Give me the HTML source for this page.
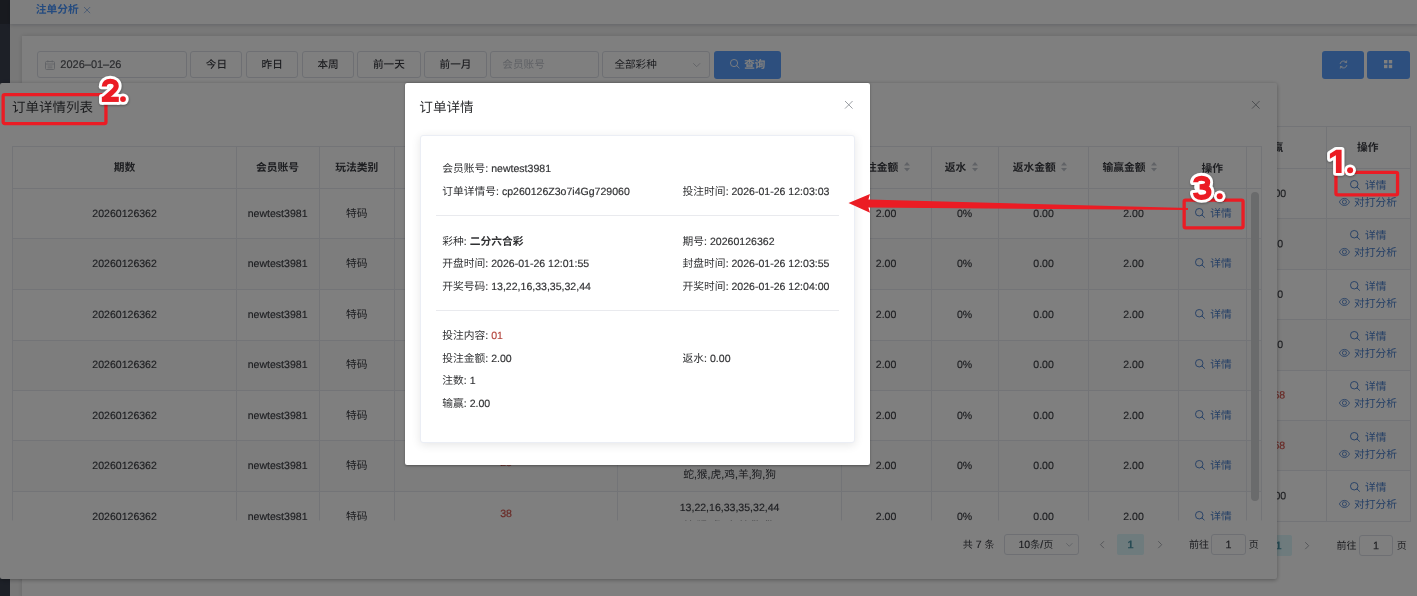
<!DOCTYPE html>
<html lang="zh-CN"><head><meta charset="utf-8"><title>订单详情</title><style>
html,body{margin:0;padding:0}
body{width:1417px;height:596px;overflow:hidden;position:relative;background:#f0f0f1;
font-family:"Liberation Sans","Noto Sans CJK SC",sans-serif;font-size:10.55px;text-rendering:geometricPrecision;}
#w{position:absolute;left:0;top:0;width:1417px;height:596px;overflow:hidden;will-change:transform}
.a{position:absolute;display:block}
.t{position:absolute;white-space:pre;margin:0}
svg.tx{font-family:"Liberation Sans","Noto Sans CJK SC",sans-serif;text-rendering:geometricPrecision;font-kerning:none;font-variant-ligatures:none;white-space:pre}
svg.tx text{stroke-width:0.16px;white-space:pre}
svg{overflow:visible}
</style></head><body><div id="w"><div class="a" style="left:0px;top:0px;width:10px;height:596px;background:#3a404f;"></div><div class="a" style="left:0px;top:0px;width:10px;height:24px;background:#31353f;"></div><div class="a" style="left:10px;top:0px;width:1407px;height:24px;background:#fff;box-shadow:0 1px 4px rgba(0,21,41,.18);"></div><svg class="a" style="left:84.1px;top:6.5px;" width="6.2" height="6.2" viewBox="0 0 6.2 6.2"><path d="M0.3 0.3L5.9 5.9M5.9 0.3L0.3 5.9" stroke="#7fa9e6" stroke-width="0.8" stroke-linecap="round"/></svg><div class="a" style="left:22px;top:36px;width:1398px;height:564px;background:#fff;box-shadow:0 0 5px rgba(0,0,0,.14);"></div><div class="a" style="left:37px;top:51px;width:150px;height:27.3px;box-sizing:border-box;border:1px solid #dcdfe6;border-radius:3px;background:#fff;"></div><svg class="a" style="left:45px;top:59.5px;" width="10" height="10" viewBox="0 0 10 10"><rect x="0.5" y="1.5" width="9" height="8" rx="1" fill="none" stroke="#c0c4cc" stroke-width="0.9"/><path d="M0.5 4H9.5M2.6 6H7.4M2.6 7.8H7.4M2.8 0.3V2.4M7.2 0.3V2.4" stroke="#c0c4cc" stroke-width="0.8" fill="none"/></svg><div class="a" style="left:190.3px;top:51px;width:52.2px;height:27.3px;box-sizing:border-box;border:1px solid #dcdfe6;border-radius:3px;background:#fff;"></div><div class="a" style="left:246px;top:51px;width:52.4px;height:27.3px;box-sizing:border-box;border:1px solid #dcdfe6;border-radius:3px;background:#fff;"></div><div class="a" style="left:302px;top:51px;width:52.2px;height:27.3px;box-sizing:border-box;border:1px solid #dcdfe6;border-radius:3px;background:#fff;"></div><div class="a" style="left:357.2px;top:51px;width:63.4px;height:27.3px;box-sizing:border-box;border:1px solid #dcdfe6;border-radius:3px;background:#fff;"></div><div class="a" style="left:424.4px;top:51px;width:62.2px;height:27.3px;box-sizing:border-box;border:1px solid #dcdfe6;border-radius:3px;background:#fff;"></div><div class="a" style="left:490.3px;top:51px;width:108.5px;height:27.3px;box-sizing:border-box;border:1px solid #dcdfe6;border-radius:3px;background:#fff;"></div><div class="a" style="left:602.3px;top:51px;width:108.2px;height:27.3px;box-sizing:border-box;border:1px solid #dcdfe6;border-radius:3px;background:#fff;"></div><svg class="a" style="left:693.3px;top:62.5px;" width="7.4" height="4.7" viewBox="0 0 7.4 4.7"><path d="M0.5 0.5L3.7 3.7L6.9 0.5" fill="none" stroke="#c0c4cc" stroke-width="0.9" stroke-linecap="round" stroke-linejoin="round"/></svg><div class="a" style="left:714.2px;top:51px;width:66.6px;height:27.7px;background:#5a9ffd;border-radius:3px;"></div><svg class="a" style="left:730.4px;top:59.45px;" width="9.6" height="9.6" viewBox="0 0 9.6 9.6"><circle cx="4.05" cy="4.05" r="3.60" fill="none" stroke="#fff" stroke-width="0.9"/><path d="M6.71 6.71L9.15 9.00" stroke="#fff" stroke-width="0.9" stroke-linecap="round"/></svg><div class="a" style="left:1322px;top:51px;width:42px;height:28px;background:#5a9ffd;border-radius:3px;"></div><svg class="a" style="left:1338.5px;top:60.0px;" width="9" height="9" viewBox="0 0 9 9"><path d="M1.15 3.6A3.5 3.5 0 0 1 7.3 2.3M7.85 5.4A3.5 3.5 0 0 1 1.7 6.7" fill="none" stroke="#fff" stroke-width="0.85" stroke-linecap="round"/><path d="M7.7 0.8L7.5 2.55L5.8 2.3M1.3 8.2L1.5 6.45L3.2 6.7" fill="none" stroke="#fff" stroke-width="0.8" stroke-linecap="round" stroke-linejoin="round"/></svg><div class="a" style="left:1367px;top:51px;width:43px;height:28px;background:#5a9ffd;border-radius:3px;"></div><svg class="a" style="left:1384.4px;top:60.4px;" width="8.2" height="8.2" viewBox="0 0 8.2 8.2"><rect x="0" y="0" width="3.4" height="3.4" fill="#fff"/><rect x="0" y="4.8" width="3.4" height="3.4" fill="#fff"/><rect x="4.8" y="0" width="3.4" height="3.4" fill="#fff"/><rect x="4.8" y="4.8" width="3.4" height="3.4" fill="#fff"/></svg><div class="a" style="left:1200px;top:126px;width:210px;height:1px;background:#e6e9ef;"></div><div class="a" style="left:1200px;top:219px;width:210px;height:50px;background:#fafafa;"></div><div class="a" style="left:1200px;top:320px;width:210px;height:50px;background:#fafafa;"></div><div class="a" style="left:1200px;top:421px;width:210px;height:49px;background:#fafafa;"></div><div class="a" style="left:1200px;top:168px;width:210px;height:1px;background:#e6e9ef;"></div><div class="a" style="left:1200px;top:218px;width:210px;height:1px;background:#e6e9ef;"></div><div class="a" style="left:1200px;top:269px;width:210px;height:1px;background:#e6e9ef;"></div><div class="a" style="left:1200px;top:319px;width:210px;height:1px;background:#e6e9ef;"></div><div class="a" style="left:1200px;top:370px;width:210px;height:1px;background:#e6e9ef;"></div><div class="a" style="left:1200px;top:420px;width:210px;height:1px;background:#e6e9ef;"></div><div class="a" style="left:1200px;top:470px;width:210px;height:1px;background:#e6e9ef;"></div><div class="a" style="left:1200px;top:521px;width:210px;height:1px;background:#e6e9ef;"></div><div class="a" style="left:1326px;top:126px;width:1px;height:395.5px;background:#e6e9ef;"></div><div class="a" style="left:1409.5px;top:126px;width:1.0px;height:395.5px;background:#e6e9ef;"></div><svg class="a" style="left:1350.15px;top:179.75px;" width="10" height="10" viewBox="0 0 10 10"><circle cx="4.22" cy="4.22" r="3.75" fill="none" stroke="#4a7fcc" stroke-width="0.95"/><path d="M7.00 7.00L9.55 9.40" stroke="#4a7fcc" stroke-width="0.95" stroke-linecap="round"/></svg><svg class="a" style="left:1339.15px;top:197.65px;" width="10.9" height="7.9" viewBox="0 0 10.9 7.9"><path d="M0.425 3.95C2.40 -0.75 8.50 -0.75 10.475 3.95C8.50 8.65 2.40 8.65 0.425 3.95Z" fill="none" stroke="#4a7fcc" stroke-width="0.85" stroke-linejoin="round"/><circle cx="5.45" cy="3.95" r="2.05" fill="none" stroke="#4a7fcc" stroke-width="0.85"/></svg><svg class="a" style="left:1350.15px;top:230.15px;" width="10" height="10" viewBox="0 0 10 10"><circle cx="4.22" cy="4.22" r="3.75" fill="none" stroke="#4a7fcc" stroke-width="0.95"/><path d="M7.00 7.00L9.55 9.40" stroke="#4a7fcc" stroke-width="0.95" stroke-linecap="round"/></svg><svg class="a" style="left:1339.15px;top:248.05px;" width="10.9" height="7.9" viewBox="0 0 10.9 7.9"><path d="M0.425 3.95C2.40 -0.75 8.50 -0.75 10.475 3.95C8.50 8.65 2.40 8.65 0.425 3.95Z" fill="none" stroke="#4a7fcc" stroke-width="0.85" stroke-linejoin="round"/><circle cx="5.45" cy="3.95" r="2.05" fill="none" stroke="#4a7fcc" stroke-width="0.85"/></svg><svg class="a" style="left:1350.15px;top:280.55px;" width="10" height="10" viewBox="0 0 10 10"><circle cx="4.22" cy="4.22" r="3.75" fill="none" stroke="#4a7fcc" stroke-width="0.95"/><path d="M7.00 7.00L9.55 9.40" stroke="#4a7fcc" stroke-width="0.95" stroke-linecap="round"/></svg><svg class="a" style="left:1339.15px;top:298.45px;" width="10.9" height="7.9" viewBox="0 0 10.9 7.9"><path d="M0.425 3.95C2.40 -0.75 8.50 -0.75 10.475 3.95C8.50 8.65 2.40 8.65 0.425 3.95Z" fill="none" stroke="#4a7fcc" stroke-width="0.85" stroke-linejoin="round"/><circle cx="5.45" cy="3.95" r="2.05" fill="none" stroke="#4a7fcc" stroke-width="0.85"/></svg><svg class="a" style="left:1350.15px;top:330.95px;" width="10" height="10" viewBox="0 0 10 10"><circle cx="4.22" cy="4.22" r="3.75" fill="none" stroke="#4a7fcc" stroke-width="0.95"/><path d="M7.00 7.00L9.55 9.40" stroke="#4a7fcc" stroke-width="0.95" stroke-linecap="round"/></svg><svg class="a" style="left:1339.15px;top:348.85px;" width="10.9" height="7.9" viewBox="0 0 10.9 7.9"><path d="M0.425 3.95C2.40 -0.75 8.50 -0.75 10.475 3.95C8.50 8.65 2.40 8.65 0.425 3.95Z" fill="none" stroke="#4a7fcc" stroke-width="0.85" stroke-linejoin="round"/><circle cx="5.45" cy="3.95" r="2.05" fill="none" stroke="#4a7fcc" stroke-width="0.85"/></svg><svg class="a" style="left:1350.15px;top:381.35px;" width="10" height="10" viewBox="0 0 10 10"><circle cx="4.22" cy="4.22" r="3.75" fill="none" stroke="#4a7fcc" stroke-width="0.95"/><path d="M7.00 7.00L9.55 9.40" stroke="#4a7fcc" stroke-width="0.95" stroke-linecap="round"/></svg><svg class="a" style="left:1339.15px;top:399.25px;" width="10.9" height="7.9" viewBox="0 0 10.9 7.9"><path d="M0.425 3.95C2.40 -0.75 8.50 -0.75 10.475 3.95C8.50 8.65 2.40 8.65 0.425 3.95Z" fill="none" stroke="#4a7fcc" stroke-width="0.85" stroke-linejoin="round"/><circle cx="5.45" cy="3.95" r="2.05" fill="none" stroke="#4a7fcc" stroke-width="0.85"/></svg><svg class="a" style="left:1350.15px;top:431.75px;" width="10" height="10" viewBox="0 0 10 10"><circle cx="4.22" cy="4.22" r="3.75" fill="none" stroke="#4a7fcc" stroke-width="0.95"/><path d="M7.00 7.00L9.55 9.40" stroke="#4a7fcc" stroke-width="0.95" stroke-linecap="round"/></svg><svg class="a" style="left:1339.15px;top:449.65px;" width="10.9" height="7.9" viewBox="0 0 10.9 7.9"><path d="M0.425 3.95C2.40 -0.75 8.50 -0.75 10.475 3.95C8.50 8.65 2.40 8.65 0.425 3.95Z" fill="none" stroke="#4a7fcc" stroke-width="0.85" stroke-linejoin="round"/><circle cx="5.45" cy="3.95" r="2.05" fill="none" stroke="#4a7fcc" stroke-width="0.85"/></svg><svg class="a" style="left:1350.15px;top:482.15px;" width="10" height="10" viewBox="0 0 10 10"><circle cx="4.22" cy="4.22" r="3.75" fill="none" stroke="#4a7fcc" stroke-width="0.95"/><path d="M7.00 7.00L9.55 9.40" stroke="#4a7fcc" stroke-width="0.95" stroke-linecap="round"/></svg><svg class="a" style="left:1339.15px;top:500.05px;" width="10.9" height="7.9" viewBox="0 0 10.9 7.9"><path d="M0.425 3.95C2.40 -0.75 8.50 -0.75 10.475 3.95C8.50 8.65 2.40 8.65 0.425 3.95Z" fill="none" stroke="#4a7fcc" stroke-width="0.85" stroke-linejoin="round"/><circle cx="5.45" cy="3.95" r="2.05" fill="none" stroke="#4a7fcc" stroke-width="0.85"/></svg><div class="a" style="left:1265px;top:535.2px;width:26.9px;height:20.5px;background:#dcf6fb;border-radius:2px;"></div><svg class="a" style="left:1305.45px;top:541.8px;" width="4.7" height="7.4" viewBox="0 0 4.7 7.4"><path d="M0.5 0.5L3.7 3.7L0.5 6.9" fill="none" stroke="#a0a3aa" stroke-width="0.9" stroke-linecap="round" stroke-linejoin="round"/></svg><div class="a" style="left:1359.2px;top:535.2px;width:33.4px;height:20.5px;box-sizing:border-box;border:1px solid #dcdfe6;border-radius:3px;"></div><svg class="a tx" style="left:0;top:0" width="1417" height="596" viewBox="0 0 1417 596"><text x="35.80" y="13.05" font-size="10.72" font-weight="bold" fill="#4a96ff">注单分析</text><text x="60.30" y="68.0" font-size="11.0" fill="#55575c" stroke="#55575c" transform="rotate(.05 90.9 68.0)">2026–01–26</text><text x="205.79" y="68.05" font-size="10.61" font-weight="500" fill="#3c3e44">今日</text><text x="261.59" y="68.05" font-size="10.61" font-weight="500" fill="#3c3e44">昨日</text><text x="317.49" y="68.05" font-size="10.61" font-weight="500" fill="#3c3e44">本周</text><text x="372.98" y="68.05" font-size="10.61" font-weight="500" fill="#3c3e44">前一天</text><text x="439.58" y="68.05" font-size="10.61" font-weight="500" fill="#3c3e44">前一月</text><text x="502.30" y="68.05" font-size="10.61" fill="#c0c4cc">会员账号</text><text x="614.40" y="68.05" font-size="10.61" fill="#3c3e44">全部彩种</text><text x="744.20" y="68.05" font-size="10.61" font-weight="bold" fill="#fff">查询</text><text x="1356.94" y="151.21" font-size="10.76" font-weight="bold" fill="#3c3e44">操作</text><text x="1261.68" y="151.21" font-size="10.76" font-weight="bold" fill="#3c3e44">输赢</text><text x="1265.67" y="196.88" font-size="10.55" fill="#3c3e44" stroke="#3c3e44" transform="rotate(.05 1275.9 196.88)">2.00</text><text x="1365.00" y="188.71" font-size="10.76" fill="#4a7fcc">详情</text><text x="1354.00" y="205.81" font-size="10.76" fill="#4a7fcc">对打分析</text><text x="1277.13" y="247.28" font-size="10.55" fill="#3c3e44" stroke="#3c3e44" transform="rotate(.05 1280.1 247.28)">0</text><text x="1365.00" y="239.11" font-size="10.76" fill="#4a7fcc">详情</text><text x="1354.00" y="256.21" font-size="10.76" fill="#4a7fcc">对打分析</text><text x="1277.13" y="297.68" font-size="10.55" fill="#3c3e44" stroke="#3c3e44" transform="rotate(.05 1280.1 297.68)">0</text><text x="1365.00" y="289.51" font-size="10.76" fill="#4a7fcc">详情</text><text x="1354.00" y="306.61" font-size="10.76" fill="#4a7fcc">对打分析</text><text x="1277.13" y="348.08" font-size="10.55" fill="#3c3e44" stroke="#3c3e44" transform="rotate(.05 1280.1 348.08)">0</text><text x="1365.00" y="339.91" font-size="10.76" fill="#4a7fcc">详情</text><text x="1354.00" y="357.01" font-size="10.76" fill="#4a7fcc">对打分析</text><text x="1264.67" y="398.48" font-size="10.55" fill="#d2524a" stroke="#d2524a" transform="rotate(.05 1274.9 398.48)">1.68</text><text x="1365.00" y="390.31" font-size="10.76" fill="#4a7fcc">详情</text><text x="1354.00" y="407.41" font-size="10.76" fill="#4a7fcc">对打分析</text><text x="1264.67" y="448.88" font-size="10.55" fill="#d2524a" stroke="#d2524a" transform="rotate(.05 1274.9 448.88)">1.68</text><text x="1365.00" y="440.71" font-size="10.76" fill="#4a7fcc">详情</text><text x="1354.00" y="457.81" font-size="10.76" fill="#4a7fcc">对打分析</text><text x="1265.67" y="499.28" font-size="10.55" fill="#3c3e44" stroke="#3c3e44" transform="rotate(.05 1275.9 499.28)">2.00</text><text x="1365.00" y="491.11" font-size="10.76" fill="#4a7fcc">详情</text><text x="1354.00" y="508.21" font-size="10.76" fill="#4a7fcc">对打分析</text><text x="1275.50" y="549.32" font-size="10.8" fill="#4f97a9" stroke="#4f97a9" font-weight="bold" transform="rotate(.05 1278.5 549.32)">1</text><text x="1336.40" y="549.06" font-size="10" fill="#3c3e44">前往</text><text x="1373.00" y="549.32" font-size="10.8" fill="#3c3e44" stroke="#3c3e44" transform="rotate(.05 1376.0 549.32)">1</text><text x="1396.80" y="549.06" font-size="10" fill="#3c3e44">页</text></svg><div class="a" style="left:0px;top:82.8px;width:1277.3px;height:496.2px;background:#fff;border-radius:2px;box-shadow:0 1px 4px rgba(0,0,0,.32);"></div><svg class="a" style="left:1252.2px;top:100.9px;" width="7.6" height="7.6" viewBox="0 0 7.6 7.6"><path d="M0.3 0.3L7.3 7.3M7.3 0.3L0.3 7.3" stroke="#909399" stroke-width="0.9" stroke-linecap="round"/></svg><div class="a" style="left:0;top:0;width:1417px;height:596px;clip-path:inset(145.8px 154.9000000000001px 75.60000000000002px 12px)"><div class="a" style="left:12px;top:239px;width:1249.6px;height:50px;background:#fafafa;"></div><div class="a" style="left:12px;top:341px;width:1249.6px;height:49px;background:#fafafa;"></div><div class="a" style="left:12px;top:441px;width:1249.6px;height:50px;background:#fafafa;"></div><div class="a" style="left:12px;top:146px;width:1249.6px;height:1px;background:#e6e9ef;"></div><div class="a" style="left:12px;top:188px;width:1249.6px;height:1px;background:#e6e9ef;"></div><div class="a" style="left:12px;top:238px;width:1249.6px;height:1px;background:#e6e9ef;"></div><div class="a" style="left:12px;top:289px;width:1249.6px;height:1px;background:#e6e9ef;"></div><div class="a" style="left:12px;top:340px;width:1249.6px;height:1px;background:#e6e9ef;"></div><div class="a" style="left:12px;top:390px;width:1249.6px;height:1px;background:#e6e9ef;"></div><div class="a" style="left:12px;top:440px;width:1249.6px;height:1px;background:#e6e9ef;"></div><div class="a" style="left:12px;top:491px;width:1249.6px;height:1px;background:#e6e9ef;"></div><div class="a" style="left:12px;top:542px;width:1249.6px;height:1px;background:#e6e9ef;"></div><div class="a" style="left:11.8px;top:146px;width:1.0px;height:375px;background:#e6e9ef;"></div><div class="a" style="left:235.8px;top:146px;width:1.0px;height:375px;background:#e6e9ef;"></div><div class="a" style="left:318.8px;top:146px;width:1.0px;height:375px;background:#e6e9ef;"></div><div class="a" style="left:394.1px;top:146px;width:1.0px;height:375px;background:#e6e9ef;"></div><div class="a" style="left:617.3px;top:146px;width:1.0px;height:375px;background:#e6e9ef;"></div><div class="a" style="left:840.9px;top:146px;width:1.0px;height:375px;background:#e6e9ef;"></div><div class="a" style="left:930.7px;top:146px;width:1.0px;height:375px;background:#e6e9ef;"></div><div class="a" style="left:998.0px;top:146px;width:1.0px;height:375px;background:#e6e9ef;"></div><div class="a" style="left:1087.8px;top:146px;width:1.0px;height:375px;background:#e6e9ef;"></div><div class="a" style="left:1177.9px;top:146px;width:1.0px;height:375px;background:#e6e9ef;"></div><div class="a" style="left:1245.9px;top:146px;width:1.0px;height:375px;background:#e6e9ef;"></div><div class="a" style="left:1261px;top:146px;width:1px;height:375px;background:#e6e9ef;"></div><svg class="a" style="left:903.8px;top:161.9px;" width="6" height="9.6" viewBox="0 0 6 9.6"><path d="M0 3.6L3 0L6 3.6Z" fill="#c0c4cc"/><path d="M0 6L3 9.6L6 6Z" fill="#c0c4cc"/></svg><svg class="a" style="left:972px;top:161.9px;" width="6" height="9.6" viewBox="0 0 6 9.6"><path d="M0 3.6L3 0L6 3.6Z" fill="#c0c4cc"/><path d="M0 6L3 9.6L6 6Z" fill="#c0c4cc"/></svg><svg class="a" style="left:1061px;top:161.9px;" width="6" height="9.6" viewBox="0 0 6 9.6"><path d="M0 3.6L3 0L6 3.6Z" fill="#c0c4cc"/><path d="M0 6L3 9.6L6 6Z" fill="#c0c4cc"/></svg><svg class="a" style="left:1150.7px;top:161.9px;" width="6" height="9.6" viewBox="0 0 6 9.6"><path d="M0 3.6L3 0L6 3.6Z" fill="#c0c4cc"/><path d="M0 6L3 9.6L6 6Z" fill="#c0c4cc"/></svg><svg class="a" style="left:1194.9px;top:208.26px;" width="10" height="10" viewBox="0 0 10 10"><circle cx="4.22" cy="4.22" r="3.75" fill="none" stroke="#4a7fcc" stroke-width="0.95"/><path d="M7.00 7.00L9.55 9.40" stroke="#4a7fcc" stroke-width="0.95" stroke-linecap="round"/></svg><svg class="a" style="left:1194.9px;top:258.26px;" width="10" height="10" viewBox="0 0 10 10"><circle cx="4.22" cy="4.22" r="3.75" fill="none" stroke="#4a7fcc" stroke-width="0.95"/><path d="M7.00 7.00L9.55 9.40" stroke="#4a7fcc" stroke-width="0.95" stroke-linecap="round"/></svg><svg class="a" style="left:1194.9px;top:309.26px;" width="10" height="10" viewBox="0 0 10 10"><circle cx="4.22" cy="4.22" r="3.75" fill="none" stroke="#4a7fcc" stroke-width="0.95"/><path d="M7.00 7.00L9.55 9.40" stroke="#4a7fcc" stroke-width="0.95" stroke-linecap="round"/></svg><svg class="a" style="left:1194.9px;top:359.26px;" width="10" height="10" viewBox="0 0 10 10"><circle cx="4.22" cy="4.22" r="3.75" fill="none" stroke="#4a7fcc" stroke-width="0.95"/><path d="M7.00 7.00L9.55 9.40" stroke="#4a7fcc" stroke-width="0.95" stroke-linecap="round"/></svg><svg class="a" style="left:1194.9px;top:410.26px;" width="10" height="10" viewBox="0 0 10 10"><circle cx="4.22" cy="4.22" r="3.75" fill="none" stroke="#4a7fcc" stroke-width="0.95"/><path d="M7.00 7.00L9.55 9.40" stroke="#4a7fcc" stroke-width="0.95" stroke-linecap="round"/></svg><svg class="a" style="left:1194.9px;top:460.26px;" width="10" height="10" viewBox="0 0 10 10"><circle cx="4.22" cy="4.22" r="3.75" fill="none" stroke="#4a7fcc" stroke-width="0.95"/><path d="M7.00 7.00L9.55 9.40" stroke="#4a7fcc" stroke-width="0.95" stroke-linecap="round"/></svg><svg class="a" style="left:1194.9px;top:511.26px;" width="10" height="10" viewBox="0 0 10 10"><circle cx="4.22" cy="4.22" r="3.75" fill="none" stroke="#4a7fcc" stroke-width="0.95"/><path d="M7.00 7.00L9.55 9.40" stroke="#4a7fcc" stroke-width="0.95" stroke-linecap="round"/></svg><svg class="a tx" style="left:0;top:0" width="1417" height="596" viewBox="0 0 1417 596"><text x="113.84" y="171.06" font-size="10.76" font-weight="bold" fill="#3c3e44">期数</text><text x="256.08" y="171.06" font-size="10.76" font-weight="bold" fill="#3c3e44">会员账号</text><text x="335.18" y="171.06" font-size="10.76" font-weight="bold" fill="#3c3e44">玩法类别</text><text x="484.48" y="171.06" font-size="10.76" font-weight="bold" fill="#3c3e44">投注内容</text><text x="707.98" y="171.06" font-size="10.76" font-weight="bold" fill="#3c3e44">开奖号码</text><text x="855.16" y="170.66" font-size="10.76" font-weight="bold" fill="#3c3e44">投注金额</text><text x="944.68" y="170.66" font-size="10.76" font-weight="bold" fill="#3c3e44">返水</text><text x="1012.76" y="170.66" font-size="10.76" font-weight="bold" fill="#3c3e44">返水金额</text><text x="1102.56" y="170.66" font-size="10.76" font-weight="bold" fill="#3c3e44">输赢金额</text><text x="1201.54" y="171.66" font-size="10.76" font-weight="bold" fill="#3c3e44">操作</text><text x="92.33" y="217.04" font-size="10.55" fill="#3c3e44" stroke="#3c3e44" transform="rotate(.05 124.6 217.04)">20260126362</text><text x="247.69" y="217.04" font-size="10.55" fill="#3c3e44" stroke="#3c3e44" transform="rotate(.05 277.6 217.04)">newtest3981</text><text x="345.94" y="217.17" font-size="10.76" fill="#3c3e44">特码</text><text x="500.13" y="214.04" font-size="10.55" fill="#d2524a" stroke="#d2524a" transform="rotate(.05 506.0 214.04)">01</text><text x="679.73" y="208.04" font-size="10.55" fill="#3c3e44" stroke="#3c3e44" transform="rotate(.05 729.6 208.04)">13,22,16,33,35,32,44</text><text x="683.15" y="226.17" font-size="10.76" fill="#3c3e44">蛇</text><text x="693.91" y="226.04" font-size="10.55" fill="#3c3e44" stroke="#3c3e44" transform="rotate(.05 695.4 226.04)">,</text><text x="696.84" y="226.17" font-size="10.76" fill="#3c3e44">猴</text><text x="707.60" y="226.04" font-size="10.55" fill="#3c3e44" stroke="#3c3e44" transform="rotate(.05 709.1 226.04)">,</text><text x="710.53" y="226.17" font-size="10.76" fill="#3c3e44">虎</text><text x="721.29" y="226.04" font-size="10.55" fill="#3c3e44" stroke="#3c3e44" transform="rotate(.05 722.8 226.04)">,</text><text x="724.22" y="226.17" font-size="10.76" fill="#3c3e44">鸡</text><text x="734.98" y="226.04" font-size="10.55" fill="#3c3e44" stroke="#3c3e44" transform="rotate(.05 736.4 226.04)">,</text><text x="737.91" y="226.17" font-size="10.76" fill="#3c3e44">羊</text><text x="748.67" y="226.04" font-size="10.55" fill="#3c3e44" stroke="#3c3e44" transform="rotate(.05 750.1 226.04)">,</text><text x="751.60" y="226.17" font-size="10.76" fill="#3c3e44">狗</text><text x="762.36" y="226.04" font-size="10.55" fill="#3c3e44" stroke="#3c3e44" transform="rotate(.05 763.8 226.04)">,</text><text x="765.29" y="226.17" font-size="10.76" fill="#3c3e44">狗</text><text x="875.83" y="217.04" font-size="10.55" fill="#3c3e44" stroke="#3c3e44" transform="rotate(.05 886.1 217.04)">2.00</text><text x="956.88" y="217.04" font-size="10.55" fill="#3c3e44" stroke="#3c3e44" transform="rotate(.05 964.5 217.04)">0%</text><text x="1033.33" y="217.04" font-size="10.55" fill="#3c3e44" stroke="#3c3e44" transform="rotate(.05 1043.6 217.04)">0.00</text><text x="1123.23" y="217.04" font-size="10.55" fill="#3c3e44" stroke="#3c3e44" transform="rotate(.05 1133.5 217.04)">2.00</text><text x="1210.20" y="217.17" font-size="10.76" fill="#4a7fcc">详情</text><text x="92.33" y="267.04" font-size="10.55" fill="#3c3e44" stroke="#3c3e44" transform="rotate(.05 124.6 267.04)">20260126362</text><text x="247.69" y="267.04" font-size="10.55" fill="#3c3e44" stroke="#3c3e44" transform="rotate(.05 277.6 267.04)">newtest3981</text><text x="345.94" y="267.17" font-size="10.76" fill="#3c3e44">特码</text><text x="500.13" y="264.04" font-size="10.55" fill="#d2524a" stroke="#d2524a" transform="rotate(.05 506.0 264.04)">05</text><text x="679.73" y="258.04" font-size="10.55" fill="#3c3e44" stroke="#3c3e44" transform="rotate(.05 729.6 258.04)">13,22,16,33,35,32,44</text><text x="683.15" y="276.17" font-size="10.76" fill="#3c3e44">蛇</text><text x="693.91" y="276.04" font-size="10.55" fill="#3c3e44" stroke="#3c3e44" transform="rotate(.05 695.4 276.04)">,</text><text x="696.84" y="276.17" font-size="10.76" fill="#3c3e44">猴</text><text x="707.60" y="276.04" font-size="10.55" fill="#3c3e44" stroke="#3c3e44" transform="rotate(.05 709.1 276.04)">,</text><text x="710.53" y="276.17" font-size="10.76" fill="#3c3e44">虎</text><text x="721.29" y="276.04" font-size="10.55" fill="#3c3e44" stroke="#3c3e44" transform="rotate(.05 722.8 276.04)">,</text><text x="724.22" y="276.17" font-size="10.76" fill="#3c3e44">鸡</text><text x="734.98" y="276.04" font-size="10.55" fill="#3c3e44" stroke="#3c3e44" transform="rotate(.05 736.4 276.04)">,</text><text x="737.91" y="276.17" font-size="10.76" fill="#3c3e44">羊</text><text x="748.67" y="276.04" font-size="10.55" fill="#3c3e44" stroke="#3c3e44" transform="rotate(.05 750.1 276.04)">,</text><text x="751.60" y="276.17" font-size="10.76" fill="#3c3e44">狗</text><text x="762.36" y="276.04" font-size="10.55" fill="#3c3e44" stroke="#3c3e44" transform="rotate(.05 763.8 276.04)">,</text><text x="765.29" y="276.17" font-size="10.76" fill="#3c3e44">狗</text><text x="875.83" y="267.04" font-size="10.55" fill="#3c3e44" stroke="#3c3e44" transform="rotate(.05 886.1 267.04)">2.00</text><text x="956.88" y="267.04" font-size="10.55" fill="#3c3e44" stroke="#3c3e44" transform="rotate(.05 964.5 267.04)">0%</text><text x="1033.33" y="267.04" font-size="10.55" fill="#3c3e44" stroke="#3c3e44" transform="rotate(.05 1043.6 267.04)">0.00</text><text x="1123.23" y="267.04" font-size="10.55" fill="#3c3e44" stroke="#3c3e44" transform="rotate(.05 1133.5 267.04)">2.00</text><text x="1210.20" y="267.17" font-size="10.76" fill="#4a7fcc">详情</text><text x="92.33" y="318.04" font-size="10.55" fill="#3c3e44" stroke="#3c3e44" transform="rotate(.05 124.6 318.04)">20260126362</text><text x="247.69" y="318.04" font-size="10.55" fill="#3c3e44" stroke="#3c3e44" transform="rotate(.05 277.6 318.04)">newtest3981</text><text x="345.94" y="318.17" font-size="10.76" fill="#3c3e44">特码</text><text x="500.13" y="315.04" font-size="10.55" fill="#d2524a" stroke="#d2524a" transform="rotate(.05 506.0 315.04)">12</text><text x="679.73" y="309.04" font-size="10.55" fill="#3c3e44" stroke="#3c3e44" transform="rotate(.05 729.6 309.04)">13,22,16,33,35,32,44</text><text x="683.15" y="327.17" font-size="10.76" fill="#3c3e44">蛇</text><text x="693.91" y="327.04" font-size="10.55" fill="#3c3e44" stroke="#3c3e44" transform="rotate(.05 695.4 327.04)">,</text><text x="696.84" y="327.17" font-size="10.76" fill="#3c3e44">猴</text><text x="707.60" y="327.04" font-size="10.55" fill="#3c3e44" stroke="#3c3e44" transform="rotate(.05 709.1 327.04)">,</text><text x="710.53" y="327.17" font-size="10.76" fill="#3c3e44">虎</text><text x="721.29" y="327.04" font-size="10.55" fill="#3c3e44" stroke="#3c3e44" transform="rotate(.05 722.8 327.04)">,</text><text x="724.22" y="327.17" font-size="10.76" fill="#3c3e44">鸡</text><text x="734.98" y="327.04" font-size="10.55" fill="#3c3e44" stroke="#3c3e44" transform="rotate(.05 736.4 327.04)">,</text><text x="737.91" y="327.17" font-size="10.76" fill="#3c3e44">羊</text><text x="748.67" y="327.04" font-size="10.55" fill="#3c3e44" stroke="#3c3e44" transform="rotate(.05 750.1 327.04)">,</text><text x="751.60" y="327.17" font-size="10.76" fill="#3c3e44">狗</text><text x="762.36" y="327.04" font-size="10.55" fill="#3c3e44" stroke="#3c3e44" transform="rotate(.05 763.8 327.04)">,</text><text x="765.29" y="327.17" font-size="10.76" fill="#3c3e44">狗</text><text x="875.83" y="318.04" font-size="10.55" fill="#3c3e44" stroke="#3c3e44" transform="rotate(.05 886.1 318.04)">2.00</text><text x="956.88" y="318.04" font-size="10.55" fill="#3c3e44" stroke="#3c3e44" transform="rotate(.05 964.5 318.04)">0%</text><text x="1033.33" y="318.04" font-size="10.55" fill="#3c3e44" stroke="#3c3e44" transform="rotate(.05 1043.6 318.04)">0.00</text><text x="1123.23" y="318.04" font-size="10.55" fill="#3c3e44" stroke="#3c3e44" transform="rotate(.05 1133.5 318.04)">2.00</text><text x="1210.20" y="318.17" font-size="10.76" fill="#4a7fcc">详情</text><text x="92.33" y="368.04" font-size="10.55" fill="#3c3e44" stroke="#3c3e44" transform="rotate(.05 124.6 368.04)">20260126362</text><text x="247.69" y="368.04" font-size="10.55" fill="#3c3e44" stroke="#3c3e44" transform="rotate(.05 277.6 368.04)">newtest3981</text><text x="345.94" y="368.17" font-size="10.76" fill="#3c3e44">特码</text><text x="500.13" y="365.04" font-size="10.55" fill="#d2524a" stroke="#d2524a" transform="rotate(.05 506.0 365.04)">17</text><text x="679.73" y="359.04" font-size="10.55" fill="#3c3e44" stroke="#3c3e44" transform="rotate(.05 729.6 359.04)">13,22,16,33,35,32,44</text><text x="683.15" y="377.17" font-size="10.76" fill="#3c3e44">蛇</text><text x="693.91" y="377.04" font-size="10.55" fill="#3c3e44" stroke="#3c3e44" transform="rotate(.05 695.4 377.04)">,</text><text x="696.84" y="377.17" font-size="10.76" fill="#3c3e44">猴</text><text x="707.60" y="377.04" font-size="10.55" fill="#3c3e44" stroke="#3c3e44" transform="rotate(.05 709.1 377.04)">,</text><text x="710.53" y="377.17" font-size="10.76" fill="#3c3e44">虎</text><text x="721.29" y="377.04" font-size="10.55" fill="#3c3e44" stroke="#3c3e44" transform="rotate(.05 722.8 377.04)">,</text><text x="724.22" y="377.17" font-size="10.76" fill="#3c3e44">鸡</text><text x="734.98" y="377.04" font-size="10.55" fill="#3c3e44" stroke="#3c3e44" transform="rotate(.05 736.4 377.04)">,</text><text x="737.91" y="377.17" font-size="10.76" fill="#3c3e44">羊</text><text x="748.67" y="377.04" font-size="10.55" fill="#3c3e44" stroke="#3c3e44" transform="rotate(.05 750.1 377.04)">,</text><text x="751.60" y="377.17" font-size="10.76" fill="#3c3e44">狗</text><text x="762.36" y="377.04" font-size="10.55" fill="#3c3e44" stroke="#3c3e44" transform="rotate(.05 763.8 377.04)">,</text><text x="765.29" y="377.17" font-size="10.76" fill="#3c3e44">狗</text><text x="875.83" y="368.04" font-size="10.55" fill="#3c3e44" stroke="#3c3e44" transform="rotate(.05 886.1 368.04)">2.00</text><text x="956.88" y="368.04" font-size="10.55" fill="#3c3e44" stroke="#3c3e44" transform="rotate(.05 964.5 368.04)">0%</text><text x="1033.33" y="368.04" font-size="10.55" fill="#3c3e44" stroke="#3c3e44" transform="rotate(.05 1043.6 368.04)">0.00</text><text x="1123.23" y="368.04" font-size="10.55" fill="#3c3e44" stroke="#3c3e44" transform="rotate(.05 1133.5 368.04)">2.00</text><text x="1210.20" y="368.17" font-size="10.76" fill="#4a7fcc">详情</text><text x="92.33" y="419.04" font-size="10.55" fill="#3c3e44" stroke="#3c3e44" transform="rotate(.05 124.6 419.04)">20260126362</text><text x="247.69" y="419.04" font-size="10.55" fill="#3c3e44" stroke="#3c3e44" transform="rotate(.05 277.6 419.04)">newtest3981</text><text x="345.94" y="419.17" font-size="10.76" fill="#3c3e44">特码</text><text x="500.13" y="416.04" font-size="10.55" fill="#d2524a" stroke="#d2524a" transform="rotate(.05 506.0 416.04)">23</text><text x="679.73" y="410.04" font-size="10.55" fill="#3c3e44" stroke="#3c3e44" transform="rotate(.05 729.6 410.04)">13,22,16,33,35,32,44</text><text x="683.15" y="428.17" font-size="10.76" fill="#3c3e44">蛇</text><text x="693.91" y="428.04" font-size="10.55" fill="#3c3e44" stroke="#3c3e44" transform="rotate(.05 695.4 428.04)">,</text><text x="696.84" y="428.17" font-size="10.76" fill="#3c3e44">猴</text><text x="707.60" y="428.04" font-size="10.55" fill="#3c3e44" stroke="#3c3e44" transform="rotate(.05 709.1 428.04)">,</text><text x="710.53" y="428.17" font-size="10.76" fill="#3c3e44">虎</text><text x="721.29" y="428.04" font-size="10.55" fill="#3c3e44" stroke="#3c3e44" transform="rotate(.05 722.8 428.04)">,</text><text x="724.22" y="428.17" font-size="10.76" fill="#3c3e44">鸡</text><text x="734.98" y="428.04" font-size="10.55" fill="#3c3e44" stroke="#3c3e44" transform="rotate(.05 736.4 428.04)">,</text><text x="737.91" y="428.17" font-size="10.76" fill="#3c3e44">羊</text><text x="748.67" y="428.04" font-size="10.55" fill="#3c3e44" stroke="#3c3e44" transform="rotate(.05 750.1 428.04)">,</text><text x="751.60" y="428.17" font-size="10.76" fill="#3c3e44">狗</text><text x="762.36" y="428.04" font-size="10.55" fill="#3c3e44" stroke="#3c3e44" transform="rotate(.05 763.8 428.04)">,</text><text x="765.29" y="428.17" font-size="10.76" fill="#3c3e44">狗</text><text x="875.83" y="419.04" font-size="10.55" fill="#3c3e44" stroke="#3c3e44" transform="rotate(.05 886.1 419.04)">2.00</text><text x="956.88" y="419.04" font-size="10.55" fill="#3c3e44" stroke="#3c3e44" transform="rotate(.05 964.5 419.04)">0%</text><text x="1033.33" y="419.04" font-size="10.55" fill="#3c3e44" stroke="#3c3e44" transform="rotate(.05 1043.6 419.04)">0.00</text><text x="1123.23" y="419.04" font-size="10.55" fill="#3c3e44" stroke="#3c3e44" transform="rotate(.05 1133.5 419.04)">2.00</text><text x="1210.20" y="419.17" font-size="10.76" fill="#4a7fcc">详情</text><text x="92.33" y="469.04" font-size="10.55" fill="#3c3e44" stroke="#3c3e44" transform="rotate(.05 124.6 469.04)">20260126362</text><text x="247.69" y="469.04" font-size="10.55" fill="#3c3e44" stroke="#3c3e44" transform="rotate(.05 277.6 469.04)">newtest3981</text><text x="345.94" y="469.17" font-size="10.76" fill="#3c3e44">特码</text><text x="500.13" y="466.04" font-size="10.55" fill="#d2524a" stroke="#d2524a" transform="rotate(.05 506.0 466.04)">28</text><text x="679.73" y="460.04" font-size="10.55" fill="#3c3e44" stroke="#3c3e44" transform="rotate(.05 729.6 460.04)">13,22,16,33,35,32,44</text><text x="683.15" y="478.17" font-size="10.76" fill="#3c3e44">蛇</text><text x="693.91" y="478.04" font-size="10.55" fill="#3c3e44" stroke="#3c3e44" transform="rotate(.05 695.4 478.04)">,</text><text x="696.84" y="478.17" font-size="10.76" fill="#3c3e44">猴</text><text x="707.60" y="478.04" font-size="10.55" fill="#3c3e44" stroke="#3c3e44" transform="rotate(.05 709.1 478.04)">,</text><text x="710.53" y="478.17" font-size="10.76" fill="#3c3e44">虎</text><text x="721.29" y="478.04" font-size="10.55" fill="#3c3e44" stroke="#3c3e44" transform="rotate(.05 722.8 478.04)">,</text><text x="724.22" y="478.17" font-size="10.76" fill="#3c3e44">鸡</text><text x="734.98" y="478.04" font-size="10.55" fill="#3c3e44" stroke="#3c3e44" transform="rotate(.05 736.4 478.04)">,</text><text x="737.91" y="478.17" font-size="10.76" fill="#3c3e44">羊</text><text x="748.67" y="478.04" font-size="10.55" fill="#3c3e44" stroke="#3c3e44" transform="rotate(.05 750.1 478.04)">,</text><text x="751.60" y="478.17" font-size="10.76" fill="#3c3e44">狗</text><text x="762.36" y="478.04" font-size="10.55" fill="#3c3e44" stroke="#3c3e44" transform="rotate(.05 763.8 478.04)">,</text><text x="765.29" y="478.17" font-size="10.76" fill="#3c3e44">狗</text><text x="875.83" y="469.04" font-size="10.55" fill="#3c3e44" stroke="#3c3e44" transform="rotate(.05 886.1 469.04)">2.00</text><text x="956.88" y="469.04" font-size="10.55" fill="#3c3e44" stroke="#3c3e44" transform="rotate(.05 964.5 469.04)">0%</text><text x="1033.33" y="469.04" font-size="10.55" fill="#3c3e44" stroke="#3c3e44" transform="rotate(.05 1043.6 469.04)">0.00</text><text x="1123.23" y="469.04" font-size="10.55" fill="#3c3e44" stroke="#3c3e44" transform="rotate(.05 1133.5 469.04)">2.00</text><text x="1210.20" y="469.17" font-size="10.76" fill="#4a7fcc">详情</text><text x="92.33" y="520.04" font-size="10.55" fill="#3c3e44" stroke="#3c3e44" transform="rotate(.05 124.6 520.04)">20260126362</text><text x="247.69" y="520.04" font-size="10.55" fill="#3c3e44" stroke="#3c3e44" transform="rotate(.05 277.6 520.04)">newtest3981</text><text x="345.94" y="520.17" font-size="10.76" fill="#3c3e44">特码</text><text x="500.13" y="517.04" font-size="10.55" fill="#d2524a" stroke="#d2524a" transform="rotate(.05 506.0 517.04)">38</text><text x="679.73" y="511.04" font-size="10.55" fill="#3c3e44" stroke="#3c3e44" transform="rotate(.05 729.6 511.04)">13,22,16,33,35,32,44</text><text x="683.15" y="529.17" font-size="10.76" fill="#3c3e44">蛇</text><text x="693.91" y="529.04" font-size="10.55" fill="#3c3e44" stroke="#3c3e44" transform="rotate(.05 695.4 529.04)">,</text><text x="696.84" y="529.17" font-size="10.76" fill="#3c3e44">猴</text><text x="707.60" y="529.04" font-size="10.55" fill="#3c3e44" stroke="#3c3e44" transform="rotate(.05 709.1 529.04)">,</text><text x="710.53" y="529.17" font-size="10.76" fill="#3c3e44">虎</text><text x="721.29" y="529.04" font-size="10.55" fill="#3c3e44" stroke="#3c3e44" transform="rotate(.05 722.8 529.04)">,</text><text x="724.22" y="529.17" font-size="10.76" fill="#3c3e44">鸡</text><text x="734.98" y="529.04" font-size="10.55" fill="#3c3e44" stroke="#3c3e44" transform="rotate(.05 736.4 529.04)">,</text><text x="737.91" y="529.17" font-size="10.76" fill="#3c3e44">羊</text><text x="748.67" y="529.04" font-size="10.55" fill="#3c3e44" stroke="#3c3e44" transform="rotate(.05 750.1 529.04)">,</text><text x="751.60" y="529.17" font-size="10.76" fill="#3c3e44">狗</text><text x="762.36" y="529.04" font-size="10.55" fill="#3c3e44" stroke="#3c3e44" transform="rotate(.05 763.8 529.04)">,</text><text x="765.29" y="529.17" font-size="10.76" fill="#3c3e44">狗</text><text x="875.83" y="520.04" font-size="10.55" fill="#3c3e44" stroke="#3c3e44" transform="rotate(.05 886.1 520.04)">2.00</text><text x="956.88" y="520.04" font-size="10.55" fill="#3c3e44" stroke="#3c3e44" transform="rotate(.05 964.5 520.04)">0%</text><text x="1033.33" y="520.04" font-size="10.55" fill="#3c3e44" stroke="#3c3e44" transform="rotate(.05 1043.6 520.04)">0.00</text><text x="1123.23" y="520.04" font-size="10.55" fill="#3c3e44" stroke="#3c3e44" transform="rotate(.05 1133.5 520.04)">2.00</text><text x="1210.20" y="520.17" font-size="10.76" fill="#4a7fcc">详情</text></svg></div><div class="a" style="left:1251.3px;top:192px;width:7.5px;height:309px;background:#d5d6d9;border-radius:4px;"></div><div class="a" style="left:1004px;top:534.2px;width:74.7px;height:20.4px;box-sizing:border-box;border:1px solid #dcdfe6;border-radius:3px;"></div><svg class="a" style="left:1066.0px;top:542.85px;" width="6.6" height="4.3" viewBox="0 0 6.6 4.3"><path d="M0.5 0.5L3.3 3.3L6.1 0.5" fill="none" stroke="#c0c4cc" stroke-width="0.9" stroke-linecap="round" stroke-linejoin="round"/></svg><svg class="a" style="left:1099.75px;top:540.8px;" width="4.7" height="7.4" viewBox="0 0 4.7 7.4"><path d="M3.7 0.5L0.5 3.7L3.7 6.9" fill="none" stroke="#a0a3aa" stroke-width="0.9" stroke-linecap="round" stroke-linejoin="round"/></svg><div class="a" style="left:1117px;top:534px;width:27px;height:20.6px;background:#dcf6fb;border-radius:2px;"></div><svg class="a" style="left:1157.55px;top:540.8px;" width="4.7" height="7.4" viewBox="0 0 4.7 7.4"><path d="M0.5 0.5L3.7 3.7L0.5 6.9" fill="none" stroke="#a0a3aa" stroke-width="0.9" stroke-linecap="round" stroke-linejoin="round"/></svg><div class="a" style="left:1211.2px;top:534.2px;width:34.4px;height:20.4px;box-sizing:border-box;border:1px solid #dcdfe6;border-radius:3px;"></div><svg class="a tx" style="left:0;top:0" width="1417" height="596" viewBox="0 0 1417 596"><text x="12.00" y="112.18" font-size="13.5" fill="#3a3c40">订单详情列表</text><text x="962.80" y="547.96" font-size="10" fill="#3c3e44">共</text><text x="972.80" y="548.13" font-size="10.55" fill="#3c3e44" stroke="#3c3e44" transform="rotate(.05 978.7 548.13)"> 7 </text><text x="984.53" y="547.96" font-size="10" fill="#3c3e44">条</text><text x="1018.50" y="548.13" font-size="10.55" fill="#3c3e44" stroke="#3c3e44" transform="rotate(.05 1024.4 548.13)">10</text><text x="1030.23" y="547.96" font-size="10" fill="#3c3e44">条</text><text x="1040.23" y="548.13" font-size="10.55" fill="#3c3e44" stroke="#3c3e44" transform="rotate(.05 1041.7 548.13)">/</text><text x="1043.17" y="547.96" font-size="10" fill="#3c3e44">页</text><text x="1127.40" y="548.22" font-size="10.8" fill="#4f97a9" stroke="#4f97a9" font-weight="bold" transform="rotate(.05 1130.4 548.22)">1</text><text x="1189.00" y="547.96" font-size="10" fill="#3c3e44">前往</text><text x="1225.40" y="548.22" font-size="10.8" fill="#3c3e44" stroke="#3c3e44" transform="rotate(.05 1228.4 548.22)">1</text><text x="1248.80" y="547.96" font-size="10" fill="#3c3e44">页</text></svg><div class="a" style="left:0;top:0;width:1417px;height:596px;background:rgba(0,0,0,.5)"></div><div class="a" style="left:405px;top:82.6px;width:464.7px;height:382.0px;background:#fff;border-radius:2px;box-shadow:0 0.5px 2.5px rgba(0,0,0,.34);"></div><svg class="a" style="left:844.7px;top:100.6px;" width="7.6" height="7.6" viewBox="0 0 7.6 7.6"><path d="M0.3 0.3L7.3 7.3M7.3 0.3L0.3 7.3" stroke="#909399" stroke-width="0.9" stroke-linecap="round"/></svg><div class="a" style="left:420px;top:135px;width:435px;height:308px;box-sizing:border-box;background:#fff;border:1px solid #ebeef5;border-radius:3px;box-shadow:0 2px 10px rgba(0,0,0,.1);"></div><div class="a" style="left:436px;top:215px;width:403.3px;height:1px;background:#e9eaee;"></div><div class="a" style="left:436px;top:310px;width:403.3px;height:1px;background:#e9eaee;"></div><svg class="a tx" style="left:0;top:0" width="1417" height="596" viewBox="0 0 1417 596"><text x="419.30" y="112.22" font-size="13.6" fill="#303133">订单详情</text><text x="442.30" y="172.17" font-size="10.76" fill="#303133">会员账号</text><text x="485.34" y="172.04" font-size="10.55" fill="#303133" stroke="#303133" transform="rotate(.05 518.2 172.04)">: newtest3981</text><text x="442.30" y="195.17" font-size="10.76" fill="#303133">订单详情号</text><text x="496.10" y="195.04" font-size="10.55" fill="#303133" stroke="#303133" transform="rotate(.05 563.0 195.04)">: cp260126Z3o7i4Gg729060</text><text x="682.60" y="195.17" font-size="10.76" fill="#303133">投注时间</text><text x="725.64" y="195.04" font-size="10.55" fill="#303133" stroke="#303133" transform="rotate(.05 777.6 195.04)">: 2026-01-26 12:03:03</text><text x="442.30" y="245.17" font-size="10.76" fill="#303133">彩种</text><text x="463.82" y="245.04" font-size="10.55" fill="#303133" stroke="#303133" transform="rotate(.05 466.8 245.04)">: </text><text x="469.68" y="245.17" font-size="10.76" font-weight="bold" fill="#303133">二分六合彩</text><text x="682.60" y="245.17" font-size="10.76" fill="#303133">期号</text><text x="704.12" y="245.04" font-size="10.55" fill="#303133" stroke="#303133" transform="rotate(.05 739.3 245.04)">: 20260126362</text><text x="442.30" y="267.17" font-size="10.76" fill="#303133">开盘时间</text><text x="485.34" y="267.04" font-size="10.55" fill="#303133" stroke="#303133" transform="rotate(.05 537.3 267.04)">: 2026-01-26 12:01:55</text><text x="682.60" y="267.17" font-size="10.76" fill="#303133">封盘时间</text><text x="725.64" y="267.04" font-size="10.55" fill="#303133" stroke="#303133" transform="rotate(.05 777.6 267.04)">: 2026-01-26 12:03:55</text><text x="442.30" y="290.17" font-size="10.76" fill="#303133">开奖号码</text><text x="485.34" y="290.04" font-size="10.55" fill="#303133" stroke="#303133" transform="rotate(.05 538.1 290.04)">: 13,22,16,33,35,32,44</text><text x="682.60" y="290.17" font-size="10.76" fill="#303133">开奖时间</text><text x="725.64" y="290.04" font-size="10.55" fill="#303133" stroke="#303133" transform="rotate(.05 777.6 290.04)">: 2026-01-26 12:04:00</text><text x="442.30" y="339.17" font-size="10.76" fill="#303133">投注内容</text><text x="485.34" y="339.04" font-size="10.55" fill="#303133" stroke="#303133" transform="rotate(.05 488.3 339.04)">: </text><text x="491.20" y="339.04" font-size="10.55" fill="#b4443c" stroke="#b4443c" transform="rotate(.05 497.1 339.04)">01</text><text x="442.30" y="362.17" font-size="10.76" fill="#303133">投注金额</text><text x="485.34" y="362.04" font-size="10.55" fill="#303133" stroke="#303133" transform="rotate(.05 498.5 362.04)">: 2.00</text><text x="682.60" y="362.17" font-size="10.76" fill="#303133">返水</text><text x="704.12" y="362.04" font-size="10.55" fill="#303133" stroke="#303133" transform="rotate(.05 717.3 362.04)">: 0.00</text><text x="442.30" y="384.17" font-size="10.76" fill="#303133">注数</text><text x="463.82" y="384.04" font-size="10.55" fill="#303133" stroke="#303133" transform="rotate(.05 469.7 384.04)">: 1</text><text x="442.30" y="407.17" font-size="10.76" fill="#303133">输赢</text><text x="463.82" y="407.04" font-size="10.55" fill="#303133" stroke="#303133" transform="rotate(.05 477.0 407.04)">: 2.00</text></svg><svg class="a" style="left:0;top:0" width="1417" height="596" viewBox="0 0 1417 596"><defs><filter id="lsh" x="-30%" y="-30%" width="160%" height="160%"><feDropShadow dx="0.3" dy="0.9" stdDeviation="0.8" flood-color="#000" flood-opacity="0.38"/></filter></defs><rect x="3.15" y="94.65" width="102.8" height="28.999999999999996" rx="1.6" fill="none" stroke="#eb1c24" stroke-width="3.3"/><rect x="1184.15" y="200.15" width="58.90000000000005" height="27.799999999999994" rx="1.6" fill="none" stroke="#eb1c24" stroke-width="3.3"/><rect x="1335.95" y="172.35" width="61.600000000000094" height="22.50000000000001" rx="1.6" fill="none" stroke="#eb1c24" stroke-width="3.3"/><path d="M848.5 203L870 194L868.4 199.5L1188 208V210L868.4 207.6L870 212.8Z" fill="#eb1c24"/><g filter="url(#lsh)"><path d="M104.3 86.5C104.3 83.2 106.6 81.25 110.3 81.25C114 81.25 116.2 83.3 116.2 86C116.2 88.6 114.6 90.2 111.5 92.8L104.8 98.6" fill="none" stroke="#fff" stroke-width="10.8" stroke-linejoin="round" stroke-linecap="butt"/><path d="M101.85 99.35H118.8" fill="none" stroke="#fff" stroke-width="10.8" stroke-linejoin="round" stroke-linecap="butt"/><path d="M101.7 86.5L106.9 86.5" fill="none" stroke="#fff" stroke-width="5.6" stroke-linecap="round"/><path d="M101.85 96.75L101.85 101.95" fill="none" stroke="#fff" stroke-width="5.6" stroke-linecap="round"/><path d="M118.8 96.75L118.8 101.95" fill="none" stroke="#fff" stroke-width="5.6" stroke-linecap="round"/><circle cx="123" cy="99.1" r="5.699999999999999" fill="#fff"/></g><path d="M104.3 86.5C104.3 83.2 106.6 81.25 110.3 81.25C114 81.25 116.2 83.3 116.2 86C116.2 88.6 114.6 90.2 111.5 92.8L104.8 98.6" fill="none" stroke="#eb1c24" stroke-width="5.2" stroke-linejoin="miter" stroke-miterlimit="2" stroke-linecap="butt"/><path d="M101.85 99.35H118.8" fill="none" stroke="#eb1c24" stroke-width="5.2" stroke-linejoin="miter" stroke-miterlimit="2" stroke-linecap="butt"/><circle cx="123" cy="99.1" r="2.9" fill="#eb1c24"/><g filter="url(#lsh)"><path d="M1195.6 182.3C1195.6 179.8 1198.2 178.25 1201.6 178.25C1205.4 178.25 1207.65 180 1207.65 182.6C1207.65 185.2 1205.4 186.9 1199.6 186.9C1205.8 186.9 1208.85 188.7 1208.85 192.1C1208.85 195.5 1206 197.35 1201.4 197.35C1197.8 197.35 1195.8 195.7 1195.5 192.7" fill="none" stroke="#fff" stroke-width="10.8" stroke-linejoin="round" stroke-linecap="butt"/><path d="M1193 182.3L1198.2 182.3" fill="none" stroke="#fff" stroke-width="5.6" stroke-linecap="round"/><path d="M1192.9 192.7L1198.1 192.7" fill="none" stroke="#fff" stroke-width="5.6" stroke-linecap="round"/><circle cx="1219.7" cy="196.3" r="5.8" fill="#fff"/></g><path d="M1195.6 182.3C1195.6 179.8 1198.2 178.25 1201.6 178.25C1205.4 178.25 1207.65 180 1207.65 182.6C1207.65 185.2 1205.4 186.9 1199.6 186.9C1205.8 186.9 1208.85 188.7 1208.85 192.1C1208.85 195.5 1206 197.35 1201.4 197.35C1197.8 197.35 1195.8 195.7 1195.5 192.7" fill="none" stroke="#eb1c24" stroke-width="5.2" stroke-linejoin="miter" stroke-miterlimit="2" stroke-linecap="butt"/><circle cx="1219.7" cy="196.3" r="3.0" fill="#eb1c24"/><g filter="url(#lsh)"><path d="M1336.2 149.7H1341.6V173H1335.9V155.3L1329.9 158.8V153.7Z" fill="#fff" stroke="#fff" stroke-width="5.6" stroke-linejoin="round"/><circle cx="1350.1" cy="170.2" r="5.8" fill="#fff"/></g><path d="M1336.2 149.7H1341.6V173H1335.9V155.3L1329.9 158.8V153.7Z" fill="#eb1c24"/><circle cx="1350.1" cy="170.2" r="3.0" fill="#eb1c24"/></svg></div></body></html>
